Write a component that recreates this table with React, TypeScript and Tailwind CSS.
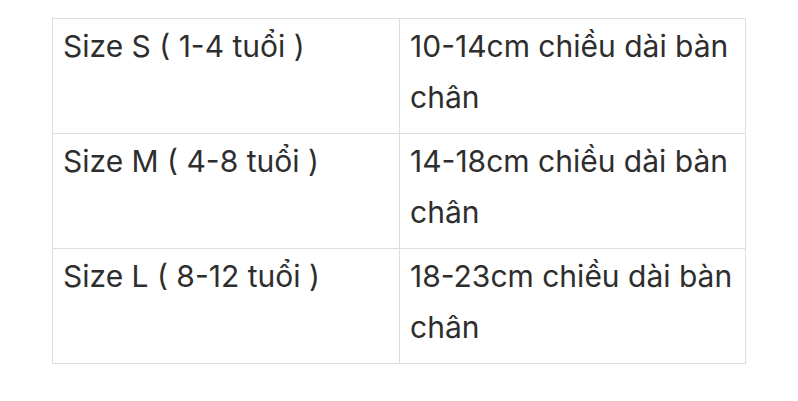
const rows = [
  { size: "Size S ( 1-4 tuổi )", length: "10-14cm chiều dài bàn chân" },
  { size: "Size M ( 4-8 tuổi )", length: "14-18cm chiều dài bàn chân" },
  { size: "Size L ( 8-12 tuổi )", length: "18-23cm chiều dài bàn chân" },
];

export default function App() {
  return (
    <div className="w-[798px] h-[401px] bg-white pt-[18px] pl-[52px] font-['Inter','Roboto',sans-serif] text-[#2e2e2e]">
      <table className="border-collapse w-[694px] table-fixed">
        <tbody>
          {rows.map((row) => (
            <tr key={row.size} className="h-[115px]">
              <td className="w-[347px] border border-[#dedede] align-top px-[10px] pt-[2px] text-[30px] leading-[51px]">
                {row.size}
              </td>
              <td className="border border-[#dedede] align-top px-[10px] pt-[2px] text-[30px] leading-[51px]">
                {row.length}
              </td>
            </tr>
          ))}
        </tbody>
      </table>
    </div>
  );
}
